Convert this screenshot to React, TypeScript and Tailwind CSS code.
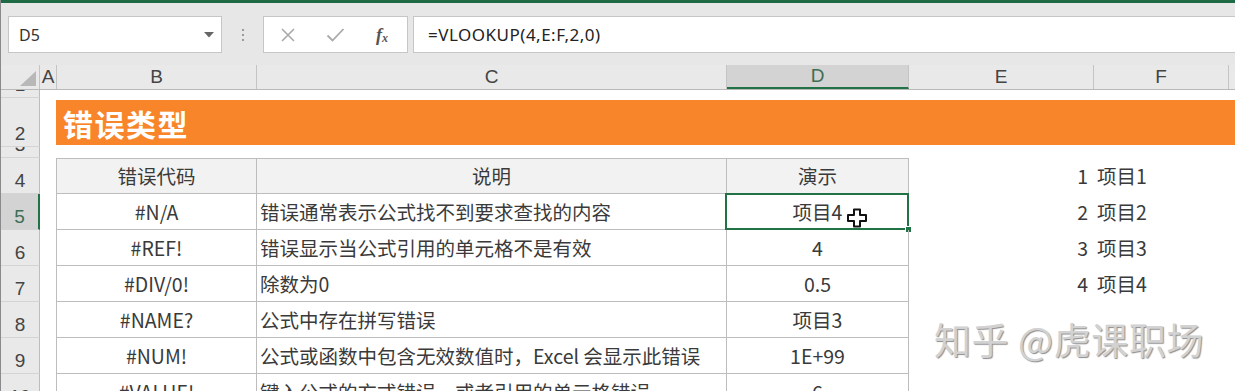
import React from "react";

const FONT = "font-['Noto_Sans_CJK_SC','Noto_Sans',sans-serif]";

type Row = { n: number; b: string; c: string; d: string; e?: string; f?: string; sel?: boolean };

const rows: Row[] = [
  { n: 5, b: "#N/A", c: "错误通常表示公式找不到要求查找的内容", d: "项目4", e: "2", f: "项目2", sel: true },
  { n: 6, b: "#REF!", c: "错误显示当公式引用的单元格不是有效", d: "4", e: "3", f: "项目3" },
  { n: 7, b: "#DIV/0!", c: "除数为0", d: "0.5", e: "4", f: "项目4" },
  { n: 8, b: "#NAME?", c: "公式中存在拼写错误", d: "项目3" },
  { n: 9, b: "#NUM!", c: "公式或函数中包含无效数值时，Excel 会显示此错误", d: "1E+99" },
  { n: 10, b: "#VALUE!", c: "键入公式的方式错误，或者引用的单元格错误", d: "6" },
];

function RowHead({ n, h, sel }: { n: number; h: string; sel?: boolean }) {
  return (
    <div
      className={`w-[39px] shrink-0 ${h} overflow-hidden flex items-end justify-center border-b border-[#d4d4d4] ${
        sel ? "bg-[#d3d3d3] border-r-2 border-r-[#217346] text-[#3d6e55]" : "bg-[#e9e9e9] border-r border-r-[#bcbcbc] text-[#444]"
      } text-[19px] leading-[22px] font-['Liberation_Sans',sans-serif]`}
    >
      <span className="pb-[1px]">{n}</span>
    </div>
  );
}

function ColHead({ w, label, sel }: { w: string; label: string; sel?: boolean }) {
  return (
    <div
      className={`${w} shrink-0 h-full flex items-center justify-center overflow-hidden border-r border-[#c4c4c4] ${
        sel ? "bg-[#d3d3d3] border-b-2 border-b-[#217346] text-[#3d6e55]" : "text-[#444]"
      } text-[19px] font-['Liberation_Sans',sans-serif]`}
    >
      {label}
    </div>
  );
}

function Cursor() {
  return (
    <svg width="22" height="20" viewBox="0 0 22 20" className="absolute left-[119px] top-[14px]">
      <path
        d="M8 1.5 H14 V7 H20 V13 H14 V18.5 H8 V13 H2 V7 H8 Z"
        fill="#fff"
        stroke="#111"
        strokeWidth="2"
        strokeLinejoin="round"
      />
    </svg>
  );
}

export default function App() {
  return (
    <div className={`relative w-[1235px] h-[391px] overflow-hidden bg-white ${FONT} border-l border-[#8a8a8a]`}>
      {/* top green strip */}
      <div className="h-[3px] bg-[#1f6b45]" />
      {/* formula toolbar */}
      <div className="h-[62px] bg-[#e7e7e7] flex items-start pt-[13px] pl-[7px]">
        <div className="w-[214px] h-[37px] bg-white border border-[#c6c6c6] flex items-center justify-between pl-[10px] pr-[7px]">
          <span className="text-[16px] text-[#333] font-['Noto_Sans',sans-serif]">D5</span>
          <svg width="10" height="6" viewBox="0 0 10 6">
            <path d="M0 0 H10 L5 5.5 Z" fill="#666" />
          </svg>
        </div>
        <div className="w-[41px] h-[37px] flex flex-col items-center justify-center gap-[3px]">
          <span className="w-[2px] h-[2px] bg-[#9a9a9a]" />
          <span className="w-[2px] h-[2px] bg-[#9a9a9a]" />
          <span className="w-[2px] h-[2px] bg-[#9a9a9a]" />
        </div>
        <div className="w-[145px] h-[37px] bg-white border border-[#c6c6c6] flex items-center">
          <div className="w-[48px] flex justify-center">
            <svg width="16" height="16" viewBox="0 0 16 16">
              <path d="M2 2 L14 14 M14 2 L2 14" stroke="#a9a9a9" strokeWidth="1.6" fill="none" />
            </svg>
          </div>
          <div className="w-[46px] flex justify-center">
            <svg width="19" height="16" viewBox="0 0 19 16">
              <path d="M1.5 8.5 L6.5 13.5 L17.5 2" stroke="#a9a9a9" strokeWidth="1.8" fill="none" />
            </svg>
          </div>
          <div className="w-[48px] flex justify-center">
            <span className="font-['Liberation_Serif',serif] italic font-bold text-[18px] text-[#555] leading-none">
              f<span className="text-[12px] relative top-[1px]">x</span>
            </span>
          </div>
        </div>
        <div className="flex-1 ml-[5px] h-[37px] bg-white border border-[#c6c6c6] border-r-0 flex items-center pl-[14px]">
          <span className="text-[17px] text-[#222] font-['Noto_Sans',sans-serif] tracking-[0.5px]">=VLOOKUP(4,E:F,2,0)</span>
        </div>
      </div>

      {/* column headers */}
      <div className="h-[25px] flex bg-[#e9e9e9] border-b border-[#b9b9b9]">
        <div className="w-[39px] shrink-0 h-full border-r border-[#c4c4c4] flex items-end justify-end pr-[3px] pb-[3px]">
          <svg width="16" height="15" viewBox="0 0 16 15">
            <path d="M16 0 V15 H0 Z" fill="#b8b8b8" />
          </svg>
        </div>
        <ColHead w="w-[17px]" label="A" />
        <ColHead w="w-[200px]" label="B" />
        <ColHead w="w-[470px]" label="C" />
        <ColHead w="w-[182px]" label="D" sel />
        <ColHead w="w-[185px]" label="E" />
        <ColHead w="w-[135px]" label="F" />
        <div className="flex-1" />
      </div>

      {/* row 1 */}
      <div className="flex h-[8px]">
        <RowHead n={1} h="h-[8px]" />
      </div>
      {/* row 2 - title */}
      <div className="flex h-[49px]">
        <RowHead n={2} h="h-[49px]" />
        <div className="w-[16px] shrink-0" />
        <div className="flex-1 py-[2px]">
          <div className="h-full bg-[#f9852a] flex items-center pl-[7px]">
            <span className="text-white font-bold text-[30px] tracking-[1.5px] leading-none">错误类型</span>
          </div>
        </div>
      </div>
      {/* row 3 */}
      <div className="flex h-[11px]">
        <RowHead n={3} h="h-[11px]" />
      </div>

      {/* row 4 - table header */}
      <div className="flex h-[36px] text-[19.5px] text-[#3a3a3a]">
        <RowHead n={4} h="h-[36px]" />
        <div className="w-[16px] shrink-0" />
        <div className="w-[201px] shrink-0 bg-[#f2f2f2] border border-[#bdbdbd] flex items-center justify-center">错误代码</div>
        <div className="w-[470px] shrink-0 bg-[#f2f2f2] border-y border-r border-[#bdbdbd] flex items-center justify-center">说明</div>
        <div className="w-[182px] shrink-0 bg-[#f2f2f2] border-y border-r border-[#bdbdbd] flex items-center justify-center">演示</div>
        <div className="w-[185px] shrink-0 flex items-center justify-end pr-[6px]">1</div>
        <div className="w-[135px] shrink-0 flex items-center pl-[3px]">项目1</div>
      </div>

      {rows.map((r) => (
        <div key={r.n} className="flex h-[36px] text-[19.5px] text-[#3a3a3a]">
          <RowHead n={r.n} h="h-[36px]" sel={r.sel} />
          <div className="w-[16px] shrink-0" />
          <div className="w-[201px] shrink-0 border-x border-b border-[#bdbdbd] flex items-center justify-center whitespace-nowrap">
            {r.b}
          </div>
          <div className="w-[470px] shrink-0 border-r border-b border-[#bdbdbd] flex items-center pl-[3px] whitespace-nowrap overflow-hidden">
            {r.c}
          </div>
          <div className="relative w-[182px] shrink-0 border-r border-b border-[#bdbdbd] flex items-center justify-center whitespace-nowrap">
            {r.d}
            {r.sel && (
              <>
                <div className="absolute -left-[2px] -top-[1px] -right-[1px] -bottom-[1px] border-2 border-[#217346]" />
                <div className="absolute -right-[4px] -bottom-[4px] w-[7px] h-[7px] bg-[#217346] border border-white" />
                <Cursor />
              </>
            )}
          </div>
          <div className="w-[185px] shrink-0 flex items-center justify-end pr-[6px]">{r.e ?? ""}</div>
          <div className="w-[135px] shrink-0 flex items-center pl-[3px]">{r.f ?? ""}</div>
        </div>
      ))}

      {/* watermark */}
      <div className="absolute left-[933px] top-[321px] text-[37px] leading-none text-[#d2d2d2] tracking-[0.6px] whitespace-nowrap [text-shadow:1px_1px_1px_rgba(0,0,0,0.45),-1px_-1px_0_rgba(255,255,255,0.9)]">
        知乎 @虎课职场
      </div>
    </div>
  );
}
